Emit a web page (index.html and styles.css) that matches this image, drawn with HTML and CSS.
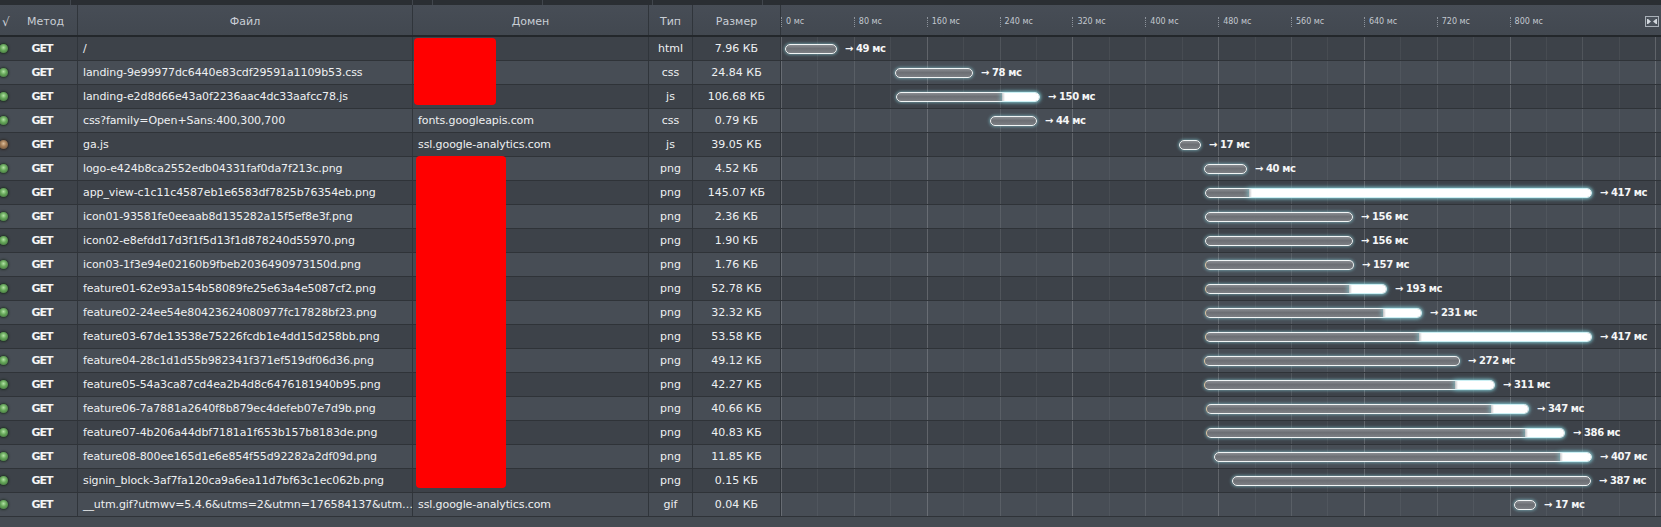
FILE: index.html
```html
<!DOCTYPE html>
<html lang="ru">
<head>
<meta charset="utf-8">
<title>Сеть</title>
<link rel="stylesheet" href="styles.css">
</head>
<body>
<div class="panel">
  <div class="topstrip"><span></span><span></span><span></span><span></span><span></span><span></span><span></span></div>
  <div class="row head">
    <div class="c c-method"><span class="check">√</span><span class="hm">Метод</span></div>
    <div class="c c-center">Файл</div>
    <div class="c c-center">Домен</div>
    <div class="c c-center">Тип</div>
    <div class="c c-center">Размер</div>
    <div class="c c-time">
      <div class="tick">0 мс</div><div class="tick">80 мс</div><div class="tick">160 мс</div><div class="tick">240 мс</div><div class="tick">320 мс</div><div class="tick">400 мс</div><div class="tick">480 мс</div><div class="tick">560 мс</div><div class="tick">640 мс</div><div class="tick">720 мс</div><div class="tick">800 мс</div>
      <svg class="fit" width="14" height="11" viewBox="0 0 14 11"><rect x="0.5" y="0.5" width="13" height="10" fill="#4b525b" stroke="#a9b0b8"/><rect x="2" y="3" width="1" height="5" fill="#d3d8de"/><path d="M3 3 L6 5.5 L3 8 Z" fill="#d3d8de"/><rect x="11" y="3" width="1" height="5" fill="#d3d8de"/><path d="M11 3 L8 5.5 L11 8 Z" fill="#d3d8de"/></svg>
    </div>
  </div>

  <div class="row dark"><div class="c c-method"><span class="dot"></span><span class="get">GET</span></div><div class="c c-file">/</div><div class="c c-dom"></div><div class="c c-center">html</div><div class="c c-center">7.96 КБ</div><div class="c c-time grid"><div class="bar" style="margin-left:4px;width:52px"></div><span class="lbl">→ 49 мс</span></div></div>
  <div class="row light"><div class="c c-method"><span class="dot"></span><span class="get">GET</span></div><div class="c c-file">landing-9e99977dc6440e83cdf29591a1109b53.css</div><div class="c c-dom"></div><div class="c c-center">css</div><div class="c c-center">24.84 КБ</div><div class="c c-time grid"><div class="bar" style="margin-left:114px;width:78px"></div><span class="lbl">→ 78 мс</span></div></div>
  <div class="row dark"><div class="c c-method"><span class="dot"></span><span class="get">GET</span></div><div class="c c-file">landing-e2d8d66e43a0f2236aac4dc33aafcc78.js</div><div class="c c-dom"></div><div class="c c-center">js</div><div class="c c-center">106.68 КБ</div><div class="c c-time grid"><div class="bar" style="margin-left:115px;width:144px"><span class="recv" style="width:37px"></span></div><span class="lbl">→ 150 мс</span></div></div>
  <div class="row light"><div class="c c-method"><span class="dot"></span><span class="get">GET</span></div><div class="c c-file">css?family=Open+Sans:400,300,700</div><div class="c c-dom">fonts.googleapis.com</div><div class="c c-center">css</div><div class="c c-center">0.79 КБ</div><div class="c c-time grid"><div class="bar" style="margin-left:209px;width:47px"></div><span class="lbl">→ 44 мс</span></div></div>
  <div class="row dark"><div class="c c-method"><span class="dot cached"></span><span class="get">GET</span></div><div class="c c-file">ga.js</div><div class="c c-dom">ssl.google-analytics.com</div><div class="c c-center">js</div><div class="c c-center">39.05 КБ</div><div class="c c-time grid"><div class="bar" style="margin-left:398px;width:22px"></div><span class="lbl">→ 17 мс</span></div></div>
  <div class="row light"><div class="c c-method"><span class="dot"></span><span class="get">GET</span></div><div class="c c-file">logo-e424b8ca2552edb04331faf0da7f213c.png</div><div class="c c-dom"></div><div class="c c-center">png</div><div class="c c-center">4.52 КБ</div><div class="c c-time grid"><div class="bar" style="margin-left:423px;width:43px"></div><span class="lbl">→ 40 мс</span></div></div>
  <div class="row dark"><div class="c c-method"><span class="dot"></span><span class="get">GET</span></div><div class="c c-file">app_view-c1c11c4587eb1e6583df7825b76354eb.png</div><div class="c c-dom"></div><div class="c c-center">png</div><div class="c c-center">145.07 КБ</div><div class="c c-time grid"><div class="bar" style="margin-left:424px;width:387px"><span class="recv" style="width:342px"></span></div><span class="lbl">→ 417 мс</span></div></div>
  <div class="row light"><div class="c c-method"><span class="dot"></span><span class="get">GET</span></div><div class="c c-file">icon01-93581fe0eeaab8d135282a15f5ef8e3f.png</div><div class="c c-dom"></div><div class="c c-center">png</div><div class="c c-center">2.36 КБ</div><div class="c c-time grid"><div class="bar" style="margin-left:424px;width:148px"></div><span class="lbl">→ 156 мс</span></div></div>
  <div class="row dark"><div class="c c-method"><span class="dot"></span><span class="get">GET</span></div><div class="c c-file">icon02-e8efdd17d3f1f5d13f1d878240d55970.png</div><div class="c c-dom"></div><div class="c c-center">png</div><div class="c c-center">1.90 КБ</div><div class="c c-time grid"><div class="bar" style="margin-left:424px;width:148px"></div><span class="lbl">→ 156 мс</span></div></div>
  <div class="row light"><div class="c c-method"><span class="dot"></span><span class="get">GET</span></div><div class="c c-file">icon03-1f3e94e02160b9fbeb2036490973150d.png</div><div class="c c-dom"></div><div class="c c-center">png</div><div class="c c-center">1.76 КБ</div><div class="c c-time grid"><div class="bar warm" style="margin-left:424px;width:149px"></div><span class="lbl">→ 157 мс</span></div></div>
  <div class="row dark"><div class="c c-method"><span class="dot"></span><span class="get">GET</span></div><div class="c c-file">feature01-62e93a154b58089fe25e63a4e5087cf2.png</div><div class="c c-dom"></div><div class="c c-center">png</div><div class="c c-center">52.78 КБ</div><div class="c c-time grid"><div class="bar warm" style="margin-left:424px;width:182px"><span class="recv" style="width:37px"></span></div><span class="lbl">→ 193 мс</span></div></div>
  <div class="row light"><div class="c c-method"><span class="dot"></span><span class="get">GET</span></div><div class="c c-file">feature02-24ee54e80423624080977fc17828bf23.png</div><div class="c c-dom"></div><div class="c c-center">png</div><div class="c c-center">32.32 КБ</div><div class="c c-time grid"><div class="bar warm" style="margin-left:424px;width:217px"><span class="recv" style="width:38px"></span></div><span class="lbl">→ 231 мс</span></div></div>
  <div class="row dark"><div class="c c-method"><span class="dot"></span><span class="get">GET</span></div><div class="c c-file">feature03-67de13538e75226fcdb1e4dd15d258bb.png</div><div class="c c-dom"></div><div class="c c-center">png</div><div class="c c-center">53.58 КБ</div><div class="c c-time grid"><div class="bar warm" style="margin-left:424px;width:387px"><span class="recv" style="width:172px"></span></div><span class="lbl">→ 417 мс</span></div></div>
  <div class="row light"><div class="c c-method"><span class="dot"></span><span class="get">GET</span></div><div class="c c-file">feature04-28c1d1d55b982341f371ef519df06d36.png</div><div class="c c-dom"></div><div class="c c-center">png</div><div class="c c-center">49.12 КБ</div><div class="c c-time grid"><div class="bar warm" style="margin-left:423px;width:256px"></div><span class="lbl">→ 272 мс</span></div></div>
  <div class="row dark"><div class="c c-method"><span class="dot"></span><span class="get">GET</span></div><div class="c c-file">feature05-54a3ca87cd4ea2b4d8c6476181940b95.png</div><div class="c c-dom"></div><div class="c c-center">png</div><div class="c c-center">42.27 КБ</div><div class="c c-time grid"><div class="bar warm" style="margin-left:423px;width:291px"><span class="recv" style="width:39px"></span></div><span class="lbl">→ 311 мс</span></div></div>
  <div class="row light"><div class="c c-method"><span class="dot"></span><span class="get">GET</span></div><div class="c c-file">feature06-7a7881a2640f8b879ec4defeb07e7d9b.png</div><div class="c c-dom"></div><div class="c c-center">png</div><div class="c c-center">40.66 КБ</div><div class="c c-time grid"><div class="bar warm" style="margin-left:425px;width:323px"><span class="recv" style="width:37px"></span></div><span class="lbl">→ 347 мс</span></div></div>
  <div class="row dark"><div class="c c-method"><span class="dot"></span><span class="get">GET</span></div><div class="c c-file">feature07-4b206a44dbf7181a1f653b157b8183de.png</div><div class="c c-dom"></div><div class="c c-center">png</div><div class="c c-center">40.83 КБ</div><div class="c c-time grid"><div class="bar warm" style="margin-left:425px;width:359px"><span class="recv" style="width:39px"></span></div><span class="lbl">→ 386 мс</span></div></div>
  <div class="row light"><div class="c c-method"><span class="dot"></span><span class="get">GET</span></div><div class="c c-file">feature08-800ee165d1e6e854f55d92282a2df09d.png</div><div class="c c-dom"></div><div class="c c-center">png</div><div class="c c-center">11.85 КБ</div><div class="c c-time grid"><div class="bar" style="margin-left:433px;width:378px"><span class="recv" style="width:31px"></span></div><span class="lbl">→ 407 мс</span></div></div>
  <div class="row dark"><div class="c c-method"><span class="dot"></span><span class="get">GET</span></div><div class="c c-file">signin_block-3af7fa120ca9a6ea11d7bf63c1ec062b.png</div><div class="c c-dom"></div><div class="c c-center">png</div><div class="c c-center">0.15 КБ</div><div class="c c-time grid"><div class="bar" style="margin-left:451px;width:359px"></div><span class="lbl">→ 387 мс</span></div></div>
  <div class="row light"><div class="c c-method"><span class="dot"></span><span class="get">GET</span></div><div class="c c-file">__utm.gif?utmwv=5.4.6&amp;utms=2&amp;utmn=176584137&amp;utm…</div><div class="c c-dom">ssl.google-analytics.com</div><div class="c c-center">gif</div><div class="c c-center">0.04 КБ</div><div class="c c-time grid"><div class="bar" style="margin-left:733px;width:22px"></div><span class="lbl">→ 17 мс</span></div></div>

  <div class="redact r1"></div>
  <div class="redact r2"></div>
</div>
</body>
</html>
```

FILE: styles.css
```css
html, body {
  margin: 0;
  padding: 0;
}
body {
  width: 1661px;
  height: 527px;
  overflow: hidden;
  background: #454b52;
  font-family: "DejaVu Sans", "Liberation Sans", sans-serif;
  font-size: 11px;
  color: #eef0f2;
}
.panel {
  position: relative;
}
.topstrip {
  height: 5px;
  background: #2a2e33;
  display: grid;
  grid-template-columns: 71px 342px 20px 110px 110px 110px 1fr;
}
.topstrip span {
  border-right: 1px solid #41464d;
}
.topstrip span:last-child {
  border-right: 0;
}
.row {
  display: grid;
  grid-template-columns: 78px 335px 236px 44px 88px 1fr;
  height: 24px;
  box-sizing: border-box;
  border-bottom: 1px solid #2f3338;
}
.row.head {
  height: 32px;
  padding-top: 3px;
  border-bottom: 2px solid #23272b;
  background: linear-gradient(#474d56, #424850);
  color: #c9ced5;
}
.row.head .c {
  margin-top: -3px;
  padding-top: 3px;
}
.row.dark {
  background: #3d4249;
}
.row.light {
  background: #474d55;
}
.c {
  display: flex;
  align-items: center;
  white-space: nowrap;
  overflow: hidden;
  border-right: 1px solid #30353b;
  min-width: 0;
}
.c-center {
  justify-content: center;
}
.c-file {
  padding-left: 5px;
  letter-spacing: -0.1px;
}
.c-dom {
  padding-left: 5px;
  letter-spacing: -0.1px;
}
.c-method {
  padding: 0;
}
.check {
  width: 14px;
  padding-left: 2px;
  box-sizing: border-box;
  font-size: 12px;
  color: #d0d5db;
  flex: none;
}
.hm {
  flex: 1;
  text-align: center;
}
.dot {
  flex: none;
  width: 9px;
  height: 9px;
  border-radius: 50%;
  margin-left: -1px;
  background: radial-gradient(circle at 50% 40%, #b2e3a4 0, #68a85c 40%, #396a33 100%);
  box-shadow: 0 0 2px 1px rgba(15, 35, 15, 0.6);
}
.dot.cached {
  background: radial-gradient(circle at 50% 40%, #dcbc98 0, #a27d58 40%, #624733 100%);
  box-shadow: 0 0 2px 1px rgba(40, 25, 15, 0.6);
}
.get {
  flex: 1;
  text-align: center;
  font-weight: bold;
  letter-spacing: -1px;
  color: #f4f5f6;
  padding-right: 1px;
}
.c-time {
  border-right: 0;
}
.row.head .c-time {
  padding-right: 2px;
}
.tick {
  flex: none;
  width: 72.86px;
  display: flex;
  align-items: center;
  font-size: 8px;
  color: #c3c8cf;
}
.tick::before {
  content: "";
  width: 0;
  height: 10px;
  border-left: 1px dotted #8d939b;
  margin-right: 4px;
}
.fit {
  margin-left: auto;
  flex: none;
}
.grid {
  background-image:
    repeating-linear-gradient(90deg, rgba(255, 255, 255, 0.09) 0 1px, transparent 1px 145.72px),
    repeating-linear-gradient(90deg, rgba(255, 255, 255, 0.05) 0 1px, transparent 1px 72.86px),
    repeating-linear-gradient(90deg, rgba(255, 255, 255, 0.05) 0 1px, transparent 1px 36.43px);
}
.bar {
  flex: none;
  height: 10px;
  box-sizing: border-box;
  border: 1.5px solid #f1f5f5;
  border-radius: 5px;
  background: linear-gradient(#8a8d92, #6c6f74 45%, #7c7f84);
  box-shadow: 0 0 3px 1px rgba(150, 230, 240, 0.45);
  display: flex;
  justify-content: flex-end;
}
.bar.warm {
  border-left-color: #e2cba6;
}
.recv {
  height: 100%;
  border-radius: 0 4px 4px 0;
  background: linear-gradient(90deg, rgba(255, 255, 255, 0.55), #ffffff 3px);
  box-shadow: 0 0 5px 1px rgba(140, 230, 240, 0.65);
}
.lbl {
  margin-left: 8px;
  font-weight: bold;
  font-size: 10px;
  letter-spacing: -0.4px;
  color: #f5f6f7;
}
.redact {
  position: absolute;
  background: #ff0000;
  border-radius: 4px;
}
.r1 {
  left: 414px;
  top: 38px;
  width: 82px;
  height: 67px;
}
.r2 {
  left: 416px;
  top: 156px;
  width: 90px;
  height: 332px;
}
```
